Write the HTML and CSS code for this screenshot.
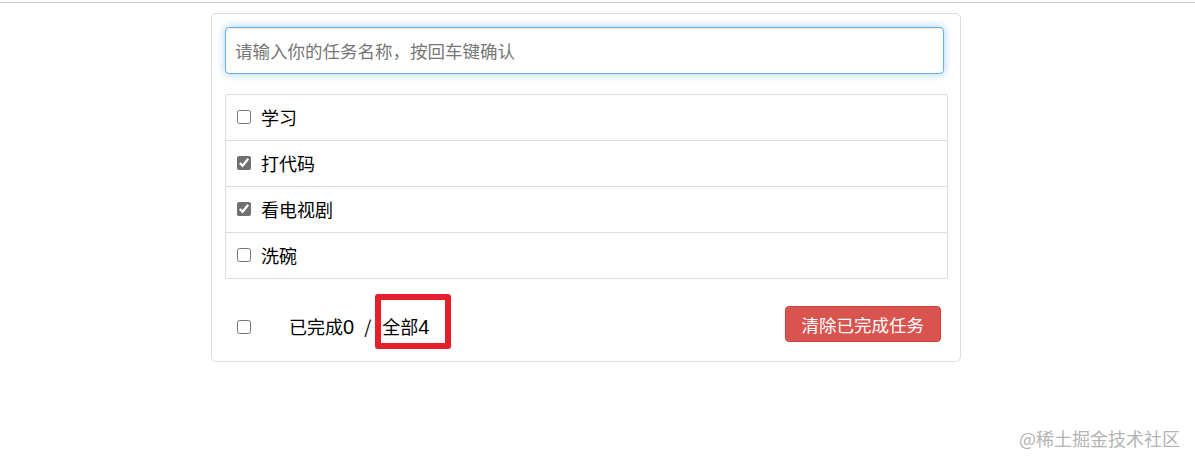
FILE: index.html
```html
<!DOCTYPE html>
<html lang="zh-CN">
<head>
    <meta charset="UTF-8">
    <title>TodoList</title>
    <link rel="stylesheet" href="styles.css">
</head>
<body>
<div class="top-line"></div>
<div id="todo_wrap">
    <div class="todo-header">
        <input type="text" class="todo-input" placeholder="请输入你的任务名称，按回车键确认">
    </div>
    <ul class="todo-main">
        <li class="todo-item"><label><input type="checkbox"><span>学习</span></label></li>
        <li class="todo-item"><label><input type="checkbox" checked><span>打代码</span></label></li>
        <li class="todo-item"><label><input type="checkbox" checked><span>看电视剧</span></label></li>
        <li class="todo-item"><label><input type="checkbox"><span>洗碗</span></label></li>
    </ul>
    <div class="todo-footer">
        <label><input type="checkbox"></label>
        <span class="todo-count">已完成<span class="num">0</span><span class="slash">/</span><span class="mark">全部<span class="num">4</span></span></span>
        <button class="btn-danger">清除已完成任务</button>
    </div>
</div>
<div class="watermark">@稀土掘金技术社区</div>
</body>
</html>
```
FILE: styles.css
```css
*{
    margin: 0;
    padding: 0;
    box-sizing: border-box;
}
body{
    font-family: "Noto Sans CJK SC", "Liberation Sans", sans-serif;
    color: #000;
    background: #fff;
    padding-top: 2px;
}
.top-line{
    height: 1px;
    background: #c9c9c9;
}
#todo_wrap{
    width: 750px;
    margin: 10px 0 0 211px;
    padding: 13px 12px 19px 13px;
    border: 1px solid #ddd;
    border-radius: 5px;
}
.todo-input{
    display: block;
    width: 719px;
    height: 47px;
    padding: 0 9px;
    font-family: inherit;
    font-size: 17.5px;
    color: #555;
    border: 1px solid #66afe9;
    border-radius: 4px;
    outline: none;
    box-shadow: inset 0 1px 1px rgba(0,0,0,.075), 0 0 8px rgba(102,175,233,.6);
}
.todo-input::placeholder{
    color: #777;
}
.todo-main{
    list-style: none;
    margin-top: 20px;
    border: 1px solid #ddd;
    border-radius: 2px;
}
.todo-item{
    height: 46px;
    padding: 0 11px;
    display: flex;
    align-items: center;
    border-bottom: 1px solid #ddd;
    font-size: 18px;
}
.todo-item:last-child{
    height: 45px;
    border-bottom: none;
}
.todo-item label{
    display: flex;
    align-items: center;
    margin-top: -2px;
}
input[type=checkbox]{
    width: 14px;
    height: 14px;
    margin: 0 10px 0 0;
    accent-color: #707070;
}
.todo-footer{
    margin-top: 27px;
    height: 36px;
    padding: 0 7px 0 12px;
    display: flex;
    align-items: center;
    font-size: 18px;
}
.todo-footer label{
    display: flex;
    margin-top: 5px;
}
.todo-footer input[type=checkbox]{
    margin-right: 38px;
}
.todo-count{
    margin-top: 3px;
}
.num{
    font-family: "Liberation Sans", sans-serif;
    font-size: 20px;
}
.slash{
    margin: 0 9px 0 10px;
}
.mark{
    position: relative;
    margin-left: 2px;
}
.mark::after{
    content: "";
    position: absolute;
    left: -7px;
    right: -22px;
    top: -19px;
    bottom: -10px;
    border: 6px solid #e5202b;
    border-radius: 3px;
}
.btn-danger{
    margin-left: auto;
    height: 36px;
    padding: 0 16px;
    font-family: inherit;
    font-size: 17.5px;
    color: #fff;
    background: #d9534f;
    border: 1px solid #d43f3a;
    border-radius: 4px;
}
.watermark{
    position: absolute;
    right: 15px;
    top: 425px;
    font-size: 18px;
    color: #b4b4b4;
}
```
